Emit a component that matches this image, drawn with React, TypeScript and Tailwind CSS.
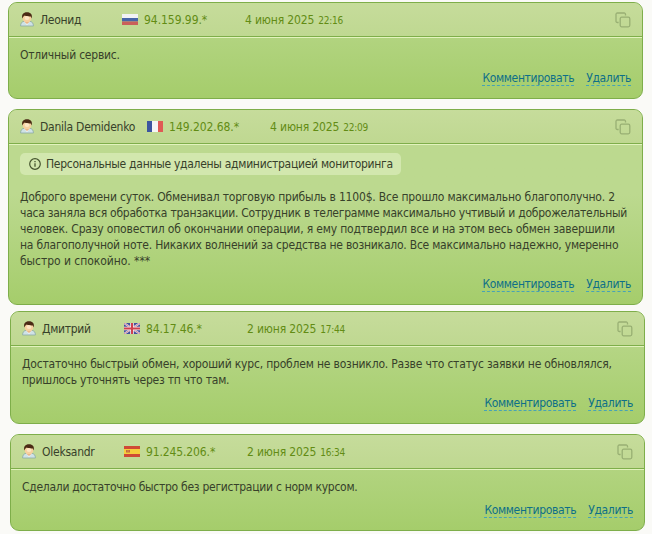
import type { ReactNode } from 'react';
import clsx from 'clsx';

type Line = { text: string; spacing?: string };

type Review = {
  name: Line;
  flag: ReactNode;
  ip: Line;
  date: string;
  time: string;
  notice?: string;
  lines: Line[];
  className: string;
};

const FlagRu = () => (
  <svg width="16" height="11" viewBox="0 0 16 11" className="shrink-0">
    <path fill="#f1f3f4" d="M0 0h16v4H0z" />
    <path fill="#4666a8" d="M0 4h16v3.500H0z" />
    <path fill="#c9605a" d="M0 7.500h16V11H0z" />
  </svg>
);

const FlagFr = () => (
  <svg width="16" height="11" viewBox="0 0 16 11" className="shrink-0">
    <path fill="#3c559f" d="M0 0h5v11H0z" />
    <path fill="#f5f5f5" d="M5 0h6v11H5z" />
    <path fill="#e05a55" d="M11 0h5v11h-5z" />
  </svg>
);

const FlagGb = () => (
  <svg width="16" height="11" viewBox="0 0 16 11" className="shrink-0">
    <path fill="#45519a" d="M0 0h16v11H0z" />
    <path stroke="#e0dfee" strokeWidth="2" d="M0 0l16 11M16 0L0 11" />
    <path stroke="#cf6f7e" strokeWidth="0.8" d="M0 0l16 11M16 0L0 11" />
    <path stroke="#f3eef0" strokeWidth="3.600" d="M8 0v11M0 5.500h16" />
    <path stroke="#d0404d" strokeWidth="2" d="M8 0v11M0 5.500h16" />
  </svg>
);

const FlagEs = () => (
  <svg width="16" height="11" viewBox="0 0 16 11" className="shrink-0">
    <path fill="#cf4a35" d="M0 0h16v11H0z" />
    <path fill="#f6cd3c" d="M0 3h16v5H0z" />
    <path fill="#c4693c" d="M2 4h4v2.500H2z" />
    <path fill="#e9b65a" d="M3.500 4.500h1v1h-1z" />
  </svg>
);

const UserIcon = () => (
  <svg width="14" height="15" viewBox="0 0 14 15" className="shrink-0">
    <path fill="#cfe2e6" stroke="#8aa9a6" strokeWidth="0.8" d="M.6 14c0-3 1.200-4.400 4-4.800h4.800c2.800.4 4 1.800 4 4.800z" />
    <path fill="#fff" d="M4.400 9.400L7 13l2.600-3.600z" />
    <path fill="#dfa273" d="M5 8.500h4v1.800L7 12l-2-1.700z" />
    <ellipse cx="7" cy="6.200" rx="4.300" ry="4.300" fill="#f7cf9e" />
    <ellipse cx="7" cy="6" rx="2.400" ry="2" fill="#fde6c4" />
    <path fill="#4b2a14" d="M2.400 6.600C1.200 2.600 3.300.3 7 .3s5.800 2.300 4.600 6.300L10.800 4.400c-2 .1-4.400-.1-6.100-.8L3.200 4.800z" />
  </svg>
);

const CopyIcon = () => (
  <svg width="16" height="16" viewBox="0 0 16 16" fill="none" stroke="#98af73" strokeWidth="1.300" className="shrink-0">
    <rect x="5.200" y="5.200" width="9.600" height="9.600" rx="1.500" />
    <path d="M3.600 10.500H2.300A1.300 1.300 0 0 1 1 9.200V2.300A1.300 1.300 0 0 1 2.300 1h6.900a1.300 1.300 0 0 1 1.300 1.300v1.100" />
  </svg>
);

const InfoIcon = () => (
  <svg width="12" height="12" viewBox="0 0 12 12" fill="none" stroke="#46552f" className="shrink-0">
    <circle cx="6" cy="6" r="5.300" strokeWidth="1.200" />
    <path strokeWidth="1.300" d="M6 5.200v3.600M6 2.900v1.300" />
  </svg>
);

const reviews: Review[] = [
  {
    name: { text: 'Леонид', spacing: 'tracking-[-0.3px]' },
    flag: <FlagRu />,
    ip: { text: '94.159.99.*', spacing: 'tracking-[-0.05px]' },
    date: '4 июня 2025',
    time: '22:16',
    lines: [{ text: 'Отличный сервис.', spacing: 'tracking-[-0.22px]' }],
    className: 'ml-2 h-[97px]',
  },
  {
    name: { text: 'Danila Demidenko', spacing: 'tracking-[-0.25px]' },
    flag: <FlagFr />,
    ip: { text: '149.202.68.*', spacing: 'tracking-[-0.05px]' },
    date: '4 июня 2025',
    time: '22:09',
    notice: 'Персональные данные удалены администрацией мониторинга',
    lines: [
      { text: 'Доброго времени суток. Обменивал торговую прибыль в 1100$. Все прошло максимально благополучно. 2', spacing: 'tracking-[-0.19px]' },
      { text: 'часа заняла вся обработка транзакции. Сотрудник в телеграмме максимально учтивый и доброжелательный', spacing: 'tracking-[-0.25px]' },
      { text: 'человек. Сразу оповестил об окончании операции, я ему подтвердил все и на этом весь обмен завершили', spacing: 'tracking-[-0.18px]' },
      { text: 'на благополучной ноте. Никаких волнений за средства не возникало. Все максимально надежно, умеренно', spacing: 'tracking-[-0.23px]' },
      { text: 'быстро и спокойно. ***', spacing: 'tracking-[-0.05px]' },
    ],
    className: 'mt-[10px] ml-2 h-[196px]',
  },
  {
    name: { text: 'Дмитрий', spacing: 'tracking-[-0.3px]' },
    flag: <FlagGb />,
    ip: { text: '84.17.46.*', spacing: 'tracking-[-0.1px]' },
    date: '2 июня 2025',
    time: '17:44',
    lines: [
      { text: 'Достаточно быстрый обмен, хороший курс, проблем не возникло. Разве что статус заявки не обновлялся,', spacing: 'tracking-[-0.19px]' },
      { text: 'пришлось уточнять через тп что там.', spacing: 'tracking-[-0.22px]' },
    ],
    className: 'mt-[6px] ml-[10px] h-[113px]',
  },
  {
    name: { text: 'Oleksandr', spacing: 'tracking-[-0.25px]' },
    flag: <FlagEs />,
    ip: { text: '91.245.206.*', spacing: 'tracking-[-0.12px]' },
    date: '2 июня 2025',
    time: '16:34',
    lines: [{ text: 'Сделали достаточно быстро без регистрации с норм курсом.', spacing: 'tracking-[-0.27px]' }],
    className: 'mt-[10px] ml-[10px] h-[97px]',
  },
];

const ReviewCard = ({ review }: { review: Review }) => (
  <article
    className={clsx(
      'flex w-[635px] shrink-0 flex-col overflow-hidden rounded-[9px] border border-[#7eae4a] bg-linear-to-t from-[#a5cd6b] to-[#bcd98f] to-[110px]',
      review.className,
    )}
  >
    <header className="flex h-[34px] shrink-0 items-center border-b border-[#7eae4a] bg-linear-to-b from-[#c6dc9b] to-[#bfd891] pr-[11px] pl-[11px]">
      <div className="flex min-w-[102px] items-center gap-[6px] pr-3">
        <UserIcon />
        <span className={review.name.spacing}>{review.name.text}</span>
      </div>
      <div className="flex w-[123px] items-center gap-[6px] text-[#628c14]">
        {review.flag}
        <span className={review.ip.spacing}>{review.ip.text}</span>
      </div>
      <div className="flex items-baseline gap-1 text-[#628c14]">
        <span className="tracking-[-0.15px]">{review.date}</span>
        <span className="text-[10px] leading-3 tracking-[-0.25px]">{review.time}</span>
      </div>
      <div className="ml-auto">
        <CopyIcon />
      </div>
    </header>

    <div className="flex grow flex-col border-t border-[#e2f3bd] px-[11px] pt-[9px] pb-[12px]">
      {review.notice && (
        <div className="-mt-[1px] mb-[14px] flex h-[22px] w-[381px] shrink-0 items-center gap-[5px] rounded-[5px] bg-[#d2e7ae] pl-[9px]">
          <InfoIcon />
          <span className="tracking-[-0.28px]">{review.notice}</span>
        </div>
      )}
      <div>
        {review.lines.map((line) => (
          <div key={line.text} className={line.spacing}>{line.text}</div>
        ))}
      </div>
      <div className="mt-auto flex justify-end gap-3 tracking-[-0.35px] text-[#0e6f88]">
        <a className="border-b border-dashed border-[#46a3b6] leading-[14px]">Комментировать</a>
        <a className="border-b border-dashed border-[#46a3b6] leading-[14px]">Удалить</a>
      </div>
    </div>
  </article>
);

export default function App() {
  return (
    <main className="flex h-[534px] w-[652px] flex-col overflow-hidden bg-[#fafaf7] pt-[2px] font-['DejaVu_Sans_Condensed','DejaVu_Sans',sans-serif] text-[12px] leading-4 whitespace-nowrap text-[#37412a]">
      {reviews.map((review) => (
        <ReviewCard key={review.ip.text} review={review} />
      ))}
    </main>
  );
}
